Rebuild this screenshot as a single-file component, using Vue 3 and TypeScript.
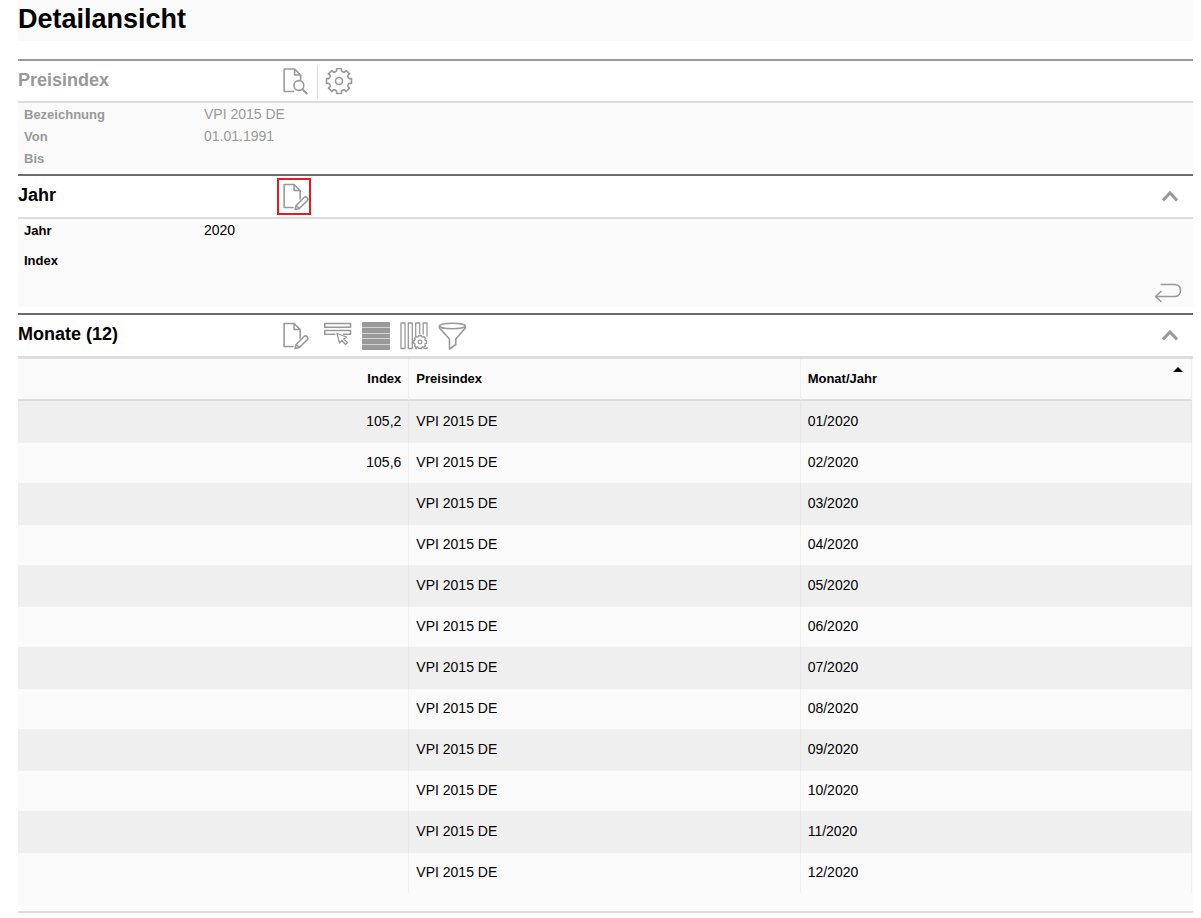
<script setup lang="ts">
import { ref } from 'vue'

interface Month {
  index: string
  name: string
  period: string
}

const values: string[] = ['105,2', '105,6']
const months: Month[] = Array.from({ length: 12 }, (_, i) => ({
  index: values[i] ?? '',
  name: 'VPI 2015 DE',
  period: `${String(i + 1).padStart(2, '0')}/2020`,
}))

const yearOpen = ref(true)
const monthsOpen = ref(true)

function gearPath(cx: number, cy: number, outer: number, inner: number): string {
  const at = (r: number, deg: number): string => {
    const a = (deg * Math.PI) / 180
    return `${(cx + r * Math.cos(a)).toFixed(2)} ${(cy + r * Math.sin(a)).toFixed(2)}`
  }
  const dip = (outer - inner) * 1.05
  let d = ''
  for (let i = 0; i < 8; i++) {
    const mid = i * 45 - 90
    d += `${i === 0 ? 'M' : 'L'}${at(outer, mid - 11)}L${at(outer, mid + 11)}`
    d += `L${at(inner + 0.8, mid + 13)}A${dip} ${dip} 0 0 0 ${at(inner + 0.8, mid + 32)}`
  }
  return d + 'Z'
}

const bigGear = gearPath(14, 13, 12.7, 9.7)
const smallGear = gearPath(20, 20, 6.6, 5)
</script>

<template>
  <main class="page">
    <h1 class="title">Detailansicht</h1>

    <section class="panel muted">
      <header class="bar">
        <h2>Preisindex</h2>
        <button type="button" class="tool first" aria-label="Preisindex anzeigen">
          <svg viewBox="-0.6 0 28 28">
            <path d="M11.5 23.5H1.5V1H12L18 7V12.500M12 1V7H18" />
            <circle cx="16.300" cy="17.500" r="4.900" />
            <path class="thick" d="M19.700 21L24.700 26" />
          </svg>
        </button>
        <span class="divider"></span>
        <button type="button" class="tool" aria-label="Einstellungen">
          <svg viewBox="0 0 28 28">
            <path :d="bigGear" />
            <circle cx="14" cy="13" r="3.500" />
          </svg>
        </button>
      </header>
      <dl class="fields">
        <div><dt>Bezeichnung</dt><dd>VPI 2015 DE</dd></div>
        <div><dt>Von</dt><dd>01.01.1991</dd></div>
        <div><dt>Bis</dt><dd></dd></div>
      </dl>
    </section>

    <section class="panel">
      <header class="bar">
        <h2>Jahr</h2>
        <button type="button" class="tool first marked" aria-label="Jahr bearbeiten">
          <svg viewBox="-0.6 0 28 28">
            <path d="M11 24.500H1.500V1.500H11.500L17.500 7.500V16.500M11.500 1.500V7.500H17.500" />
            <path d="M12.500 26.500L13.500 22.500L21.500 14.500Q23 13.300 24.500 14.700Q26 16.200 24.700 17.700L16.700 25.500ZM13.500 22.500L16.700 25.500" />
          </svg>
        </button>
        <button type="button" class="toggle" aria-label="Jahr ein- oder ausklappen" :aria-expanded="yearOpen" @click="yearOpen = !yearOpen">
          <svg viewBox="0 0 16 12"><path d="M1 10.500L8 3L15 10.500" /></svg>
        </button>
      </header>
      <div v-if="yearOpen" class="year">
        <dl class="fields spaced">
          <div><dt>Jahr</dt><dd>2020</dd></div>
          <div><dt>Index</dt><dd></dd></div>
        </dl>
        <div class="actions">
          <button type="button" class="back" aria-label="Zurück">
            <svg viewBox="0 0 28 20">
              <path d="M6.500 1.500H21Q26.500 2 26.500 7.500Q26.500 13.200 21 13.500H1.500M7.500 8L1.500 13.500L7.500 19" />
            </svg>
          </button>
        </div>
      </div>
    </section>

    <section class="panel months">
      <header class="bar">
        <h2>Monate (12)</h2>
        <button type="button" class="tool first" aria-label="Monate bearbeiten">
          <svg viewBox="-0.6 0 28 28">
            <path d="M11 24.500H1.500V1.500H11.500L17.500 7.500V16.500M11.500 1.500V7.500H17.500" />
            <path d="M12.500 26.500L13.500 22.500L21.500 14.500Q23 13.300 24.500 14.700Q26 16.200 24.700 17.700L16.700 25.500ZM13.500 22.500L16.700 25.500" />
          </svg>
        </button>
        <div class="group">
          <button type="button" class="tool" aria-label="Zeile auswählen">
            <svg viewBox="0 0 28 28">
              <path d="M.7 1.500H26.500V5.300H.7ZM11.500 12.300H.7V8.500H26.500V12.300H19" />
              <path class="fine" d="M13 11.500L15.500 21L17.800 18.500L21.500 22.500L23.500 20.500L19.800 17L22.500 15Z" />
            </svg>
          </button>
          <button type="button" class="tool" aria-label="Listenansicht">
            <svg viewBox="0 0 28 28">
              <rect class="solid" width="28" height="28" />
              <path class="gaps" d="M0 5.500H28M0 11.500H28M0 16.500H28M0 22.500H28" />
            </svg>
          </button>
          <button type="button" class="tool" aria-label="Spalten einstellen">
            <svg viewBox="0 0 28 28">
              <path class="fine" d="M1 1H5V26.500H1ZM8.300 1H12.300V26.500H8.300ZM19.700 12V1H15.700V14.500M15.700 25V26.500H17M23.200 12.500V1H27V14.500M23.500 26.500H27V25" />
              <path class="fine" :d="smallGear" />
              <circle class="fine" cx="20" cy="20" r="1.800" />
            </svg>
          </button>
          <button type="button" class="tool" aria-label="Filtern">
            <svg viewBox="0 0 28 28">
              <ellipse cx="14.400" cy="4" rx="13" ry="2.800" />
              <path d="M1.400 4V6L11.500 17V27L17.800 22.500V17L27.400 6V4" />
            </svg>
          </button>
        </div>
        <button type="button" class="toggle" aria-label="Monate ein- oder ausklappen" :aria-expanded="monthsOpen" @click="monthsOpen = !monthsOpen">
          <svg viewBox="0 0 16 12"><path d="M1 10.500L8 3L15 10.500" /></svg>
        </button>
      </header>
      <div v-if="monthsOpen" class="grid">
        <table>
          <thead>
            <tr>
              <th scope="col" class="num">Index</th>
              <th scope="col">Preisindex</th>
              <th scope="col" class="sorted" aria-sort="ascending">Monat/Jahr</th>
            </tr>
          </thead>
          <tbody>
            <tr v-for="month in months" :key="month.period">
              <td class="num">{{ month.index }}</td>
              <td>{{ month.name }}</td>
              <td>{{ month.period }}</td>
            </tr>
          </tbody>
        </table>
      </div>
    </section>
  </main>
</template>

<style>
body {
  background: #fff;
}
</style>

<style scoped>
.page {
  padding: 0 8px 5px 18px;
  font-family: "Liberation Sans", Arial, sans-serif;
  font-size: 14px;
  line-height: 16px;
  color: #000;
}
.title {
  margin: 0 0 18px;
  padding: 4px 0 7px;
  background: #fafafa;
  font-size: 27px;
  line-height: 30px;
}
.panel {
  border-top: 2px solid #6b6b6b;
  margin-bottom: 6px;
}
.muted {
  border-top-color: #999;
  margin-bottom: 5px;
  color: #999;
}
.bar {
  display: flex;
  align-items: flex-start;
  height: 41px;
  border-bottom: 2px solid #ddd;
}
.muted .bar {
  height: 40px;
}
.months .bar {
  border-bottom-width: 3px;
}
h2 {
  flex: none;
  width: 259px;
  margin: 0;
  padding-top: 9px;
  font-size: 18px;
  line-height: 20px;
}
button {
  flex: none;
  padding: 0;
  border: 0;
  background: none;
  color: #999;
  cursor: pointer;
}
svg {
  display: block;
  fill: none;
  stroke: #999;
  stroke-width: 1.6;
  stroke-linejoin: round;
}
.tool svg {
  width: 28px;
  height: 28px;
}
.tool {
  margin-top: 7px;
}
.first {
  box-sizing: border-box;
  width: 34px;
  height: 37px;
  margin-top: 2px;
  padding: 3px;
  border: 2px solid transparent;
}
.first svg {
  overflow: visible;
}
.marked {
  border-color: #e31b23;
}
.thick {
  stroke-width: 2;
}
.fine {
  stroke-width: 1.3;
}
.solid {
  fill: #999;
  stroke: none;
}
.gaps {
  stroke: #d4d4d4;
  stroke-width: 1;
}
.divider {
  width: 1px;
  height: 34px;
  margin: 4px 7px 0 6px;
  background: #ddd;
}
.group {
  display: flex;
  gap: 10px;
  margin-left: 13px;
}
.toggle {
  margin: 14px 15px 0 auto;
}
.toggle svg {
  width: 16px;
  height: 12px;
  stroke-width: 3;
  stroke-linejoin: miter;
}
.fields {
  display: grid;
  margin: 0;
  padding: 0 6px;
  background: #fafafa;
}
.spaced {
  row-gap: 8px;
}
.fields div {
  display: grid;
  grid-template-columns: 180px 1fr;
  height: 22px;
  line-height: 22px;
}
dt {
  padding-top: 1px;
  font-size: 13px;
  font-weight: bold;
}
dd {
  margin: 0;
}
.year {
  background: #fafafa;
}
.actions {
  display: flex;
  justify-content: flex-end;
  padding: 12px 11px 4px;
}
.back svg {
  width: 28px;
  height: 20px;
}
.months {
  margin-bottom: 0;
}
.grid {
  padding: 0 1px 13px 0;
  margin-bottom: 5px;
  background: #fafafa;
}
.months::after {
  content: "";
  display: block;
  height: 2px;
  background: #ddd;
}
table {
  width: 100%;
  table-layout: fixed;
  border-collapse: separate;
  border-spacing: 0;
}
th,
td {
  box-sizing: border-box;
  height: 40px;
  padding: 0 7px;
  border-right: 1px solid #f0f0f0;
  text-align: left;
}
td {
  padding-bottom: 2px;
}
th {
  height: 42px;
  border-bottom: 2px solid #ddd;
  font-size: 13px;
}
.num {
  text-align: right;
}
.sorted {
  position: relative;
}
.sorted::after {
  content: "";
  position: absolute;
  top: 8px;
  right: 8px;
  border: 5px solid transparent;
  border-top-width: 0;
  border-bottom-color: #000;
}
tbody tr:nth-child(odd) td {
  height: 42px;
  border-right-color: #e8e8e8;
  background: #efefef;
}
</style>
